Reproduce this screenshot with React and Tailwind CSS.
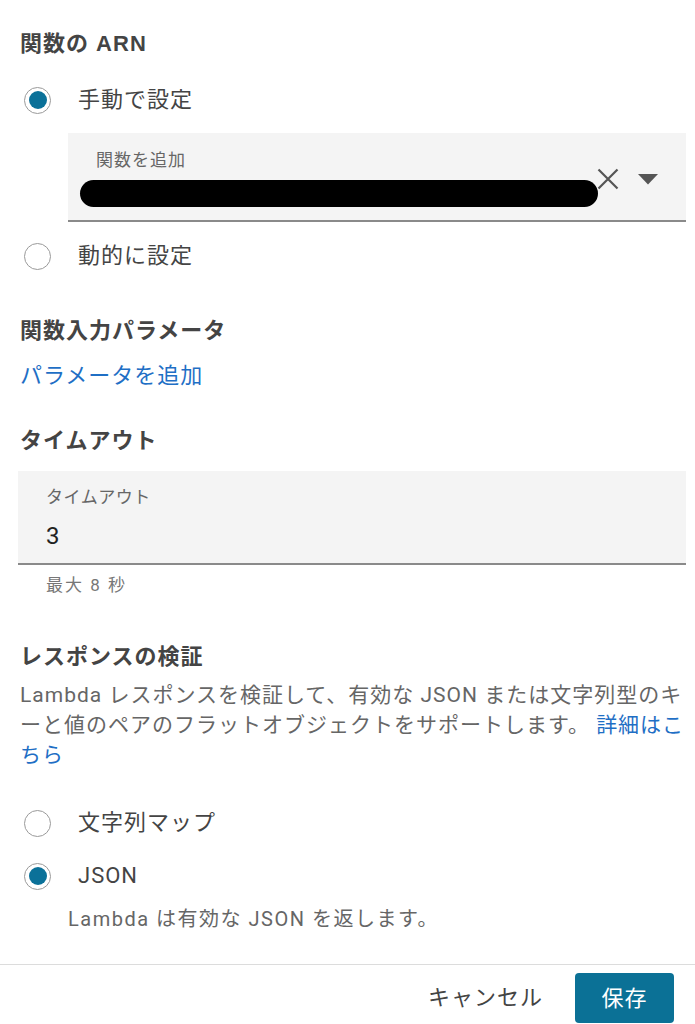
import React from "react";

const jp = { fontFamily: "Roboto, 'Noto Sans CJK JP', sans-serif" };
const hd = { fontFamily: "'Liberation Sans', 'Noto Sans CJK JP', sans-serif" };

function Radio({ checked }) {
  return (
    <span className="flex h-[27px] w-[27px] shrink-0 items-center justify-center rounded-full border border-[#9a9a9a] bg-white">
      {checked && <span className="h-[18px] w-[18px] rounded-full bg-[#0b7199]" />}
    </span>
  );
}

function RadioRow({ checked, label, className = "" }) {
  return (
    <div className={"flex items-center pl-[4px] " + className}>
      <Radio checked={checked} />
      <span className="ml-[27px] text-[22px] tracking-[1px] leading-[28px] text-[#444]">{label}</span>
    </div>
  );
}

function Heading({ children, className = "" }) {
  return (
    <h2 style={hd} className={"text-[22px] tracking-[1px] font-bold leading-[28px] text-[#444] " + className}>
      {children}
    </h2>
  );
}

export default function App() {
  return (
    <div style={jp} className="w-[695px] h-[1024px] overflow-hidden bg-white">
      <div className="pl-[20px] pr-[9px]">
        <Heading className="pt-[30px]">関数の ARN</Heading>

        <RadioRow checked label="手動で設定" className="mt-[28px]" />

        <div className="ml-[48px] mt-[19px] h-[89px] bg-[#f4f4f4] border-b-2 border-[#8a8a8a] relative">
          <div className="pl-[28px] pt-[16px] text-[17px] tracking-[1px] leading-[22px] text-[#666]">関数を追加</div>
          <div className="ml-[12px] mt-[9px] h-[27px] w-[518px] rounded-full bg-black" />
          <div className="absolute left-[529px] top-[35px] flex items-center">
            <svg width="22" height="22" viewBox="0 0 22 22">
              <path d="M1.5 1.5 L20.5 20.5 M20.5 1.5 L1.5 20.5" stroke="#555" strokeWidth="2.2" fill="none" />
            </svg>
            <svg className="ml-[19px]" width="20" height="11" viewBox="0 0 20 11">
              <path d="M0 0 H20 L10 10.5 Z" fill="#555" />
            </svg>
          </div>
        </div>

        <RadioRow label="動的に設定" className="mt-[20px]" />

        <Heading className="mt-[47px]">関数入力パラメータ</Heading>
        <div className="mt-[17px] text-[22px] tracking-[1px] leading-[28px] text-[#1f6fc5]">パラメータを追加</div>

        <Heading className="mt-[37px]">タイムアウト</Heading>
        <div className="-ml-[2px] mt-[16px] h-[94px] bg-[#f4f4f4] border-b-2 border-[#8a8a8a]">
          <div className="pl-[28px] pt-[16px] text-[17px] tracking-[0.5px] leading-[20px] text-[#666]">タイムアウト</div>
          <div className="pl-[28px] pt-[15px] text-[24px] leading-[28px] text-[#222]">3</div>
        </div>
        <div className="pl-[26px] mt-[9px] text-[17px] tracking-[2px] leading-[22px] text-[#777]">最大 8 秒</div>

        <Heading className="mt-[47px]">レスポンスの検証</Heading>
        <p className="mt-[9px] text-[21px] tracking-[1px] leading-[30px] text-[#666]">
          Lambda レスポンスを検証して、有効な JSON または文字列型のキーと値のペアのフラットオブジェクトをサポートします。{" "}
          <span className="text-[#1f6fc5]">詳細はこちら</span>
        </p>

        <RadioRow label="文字列マップ" className="mt-[39px]" />
        <RadioRow checked label="JSON" className="mt-[25px]" />
        <div className="pl-[48px] mt-[16px] text-[20px] tracking-[1.5px] leading-[26px] text-[#666]">
          Lambda は有効な JSON を返します。
        </div>
      </div>

      <div className="mt-[32px] border-t border-[#dcdcdc] flex items-center justify-end pr-[21px] pt-[8px]">
        <button className="text-[22px] tracking-[1px] leading-[28px] text-[#444] mr-[32px]">キャンセル</button>
        <button className="h-[50px] w-[99px] rounded-[4px] bg-[#0b7196] text-[22px] tracking-[1px] text-white">保存</button>
      </div>
    </div>
  );
}
